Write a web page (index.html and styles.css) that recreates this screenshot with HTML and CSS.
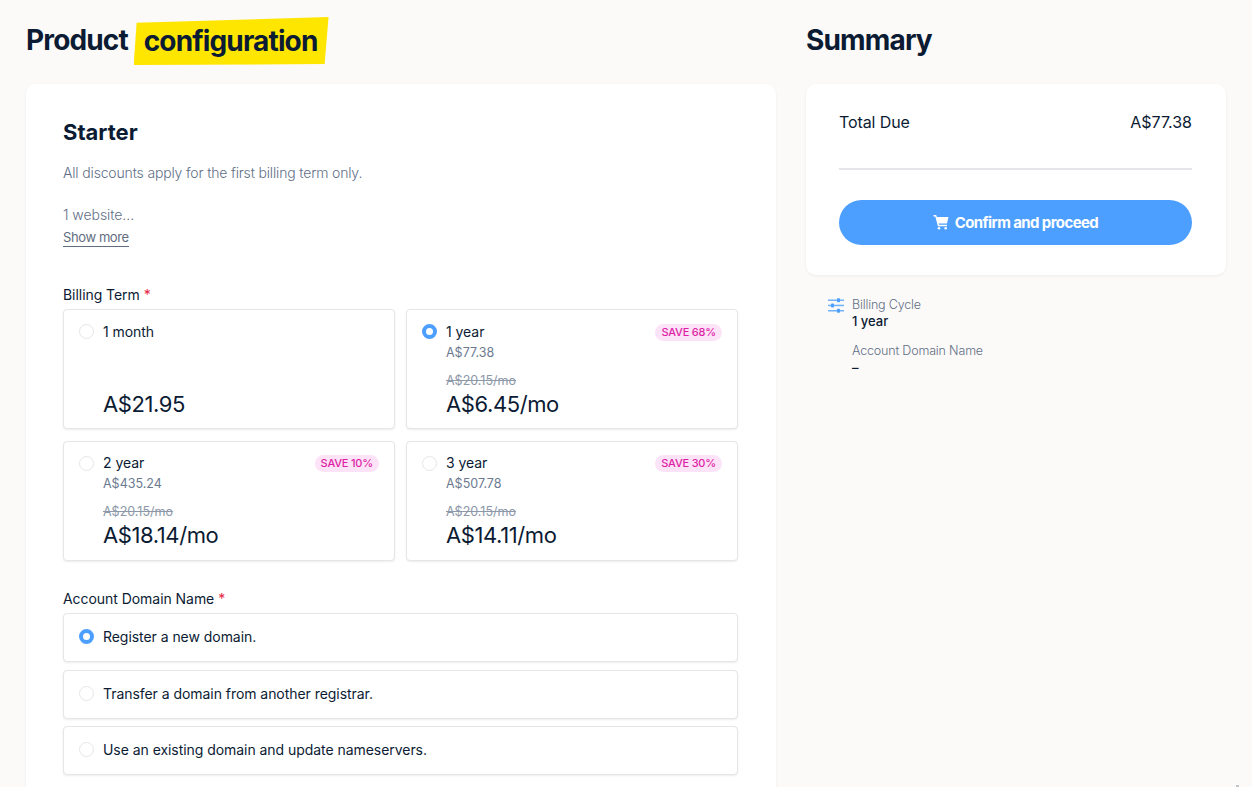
FILE: index.html
```html
<!DOCTYPE html>
<html lang="en">
<head>
  <meta charset="UTF-8">
  <meta name="viewport" content="width=device-width, initial-scale=1.0">
  <title>Product configuration</title>
  <link rel="stylesheet" href="styles.css">
</head>
<body>
  <div class="page">
    <div class="main">
      <h1 class="page-title">Product <span class="marker">configuration</span></h1>
      <div class="card config">
        <h2 class="plan-name">Starter</h2>
        <p class="note">All discounts apply for the first billing term only.</p>
        <p class="features">1 website...</p>
        <a class="show-more" href="#">Show more</a>

        <div class="field billing">
          <div class="field-label">Billing Term <span class="req">*</span></div>
          <div class="terms">
            <div class="option term">
              <span class="radio"></span>
              <div class="term-body">
                <div class="term-head"><span class="term-name">1 month</span></div>
                <div class="term-price">A$21.95</div>
              </div>
            </div>
            <div class="option term">
              <span class="radio checked"></span>
              <div class="term-body">
                <div class="term-head"><span class="term-name">1 year</span><span class="save">SAVE 68%</span></div>
                <div class="term-total">A$77.38</div>
                <div class="term-old">A$20.15/mo</div>
                <div class="term-price">A$6.45/mo</div>
              </div>
            </div>
            <div class="option term">
              <span class="radio"></span>
              <div class="term-body">
                <div class="term-head"><span class="term-name">2 year</span><span class="save">SAVE 10%</span></div>
                <div class="term-total">A$435.24</div>
                <div class="term-old">A$20.15/mo</div>
                <div class="term-price">A$18.14/mo</div>
              </div>
            </div>
            <div class="option term">
              <span class="radio"></span>
              <div class="term-body">
                <div class="term-head"><span class="term-name">3 year</span><span class="save">SAVE 30%</span></div>
                <div class="term-total">A$507.78</div>
                <div class="term-old">A$20.15/mo</div>
                <div class="term-price">A$14.11/mo</div>
              </div>
            </div>
          </div>
        </div>

        <div class="field domain">
          <div class="field-label">Account Domain Name <span class="req">*</span></div>
          <div class="domains">
            <div class="option domain-row"><span class="radio checked"></span>Register a new domain.</div>
            <div class="option domain-row"><span class="radio"></span>Transfer a domain from another registrar.</div>
            <div class="option domain-row"><span class="radio"></span>Use an existing domain and update nameservers.</div>
          </div>
        </div>
      </div>
    </div>

    <div class="side">
      <h1 class="page-title summary-title">Summary</h1>
      <div class="card summary">
        <div class="total"><span class="total-label">Total Due</span><span>A$77.38</span></div>
        <button class="confirm">
          <svg class="cart" viewBox="0 0 16 16" width="16" height="16" fill="#fff">
            <path d="M0.500 1H3.200L3.900 3H15.500L14 9.500H5.600L6 10.800H14V12.200H4.900L2.300 2.400H0.500Z"/>
            <circle cx="6" cy="14.300" r="1.300"/>
            <circle cx="12.700" cy="14.300" r="1.300"/>
          </svg>
          Confirm and proceed
        </button>
      </div>
      <div class="details">
        <svg class="sliders" viewBox="0 0 16 16" width="16" height="16" fill="#4d9fff">
          <rect class="slider-line" x="0" y="1.500" width="16" height="1.500"/><rect x="9" y="0.300" width="3" height="4" rx="0.800"/>
          <rect class="slider-line" x="0" y="6.700" width="16" height="1.500"/><rect x="3" y="5.500" width="3" height="4" rx="0.800"/>
          <rect class="slider-line" x="0" y="12" width="16" height="1.500"/><rect x="9" y="10.800" width="3" height="4" rx="0.800"/>
        </svg>
        <div class="detail-list">
          <div class="detail-label">Billing Cycle</div>
          <div class="detail-value">1 year</div>
          <div class="detail-label second">Account Domain Name</div>
          <div class="detail-value">–</div>
        </div>
      </div>
    </div>
  </div>
  <div class="corner-mark"></div>
</body>
</html>
```

FILE: styles.css
```css
html, body {
  height: 100%;
  overflow: hidden;
}

body {
  margin: 0;
  font-family: Inter, "Noto Sans", sans-serif;
  background-color: #fcfaf8;
  color: #0b1b33;
}

.page {
  display: flex;
  gap: 30px;
  padding-left: 26px;
}

.main {
  width: 750px;
}

.side {
  width: 420px;
}

.page-title {
  margin: 0;
  height: 84px;
  font-size: 28px;
  font-weight: 700;
  letter-spacing: -0.85px;
  line-height: 34px;
  padding-top: 23px;
  box-sizing: border-box;
  color: #0b1b33;
}

.marker {
  display: inline-block;
  position: relative;
  top: 1px;
  z-index: 0;
  padding: 0 11px 0 10px;
}

.marker::before {
  content: "";
  position: absolute;
  z-index: -1;
  left: 0;
  right: 0;
  top: -7px;
  bottom: -7px;
  background-color: #ffe600;
  clip-path: polygon(1.500% 12%, 100% 0, 98% 98%, 0 100%);
}

.card {
  background-color: #fff;
  border-radius: 10px;
  box-shadow: 0 1px 3px rgba(20, 30, 50, 0.06);
}

.config {
  padding: 33px 38px 40px 37px;
}

.plan-name {
  margin: 0;
  font-size: 22px;
  font-weight: 700;
  line-height: 30px;
}

.note {
  margin: 16px 0 0;
  font-size: 14px;
  font-weight: 300;
  letter-spacing: -0.16px;
  line-height: 20px;
  color: #5f6f87;
}

.features {
  margin: 22px 0 0;
  font-size: 14px;
  font-weight: 300;
  letter-spacing: -0.05px;
  line-height: 20px;
  color: #5f6f87;
}

.show-more {
  display: inline-block;
  margin-top: 4px;
  font-size: 13px;
  letter-spacing: -0.4px;
  line-height: 17px;
  color: #5f6d80;
  text-decoration: none;
  border-bottom: 1px solid #5f6d80;
}

.field-label {
  font-size: 14px;
  letter-spacing: -0.05px;
  line-height: 20px;
  color: #0b1b33;
}

.req {
  color: #e5253f;
}

.billing {
  margin-top: 38px;
}

.terms {
  display: grid;
  grid-template-columns: 332px 332px;
  gap: 11.600px 11px;
  margin-top: 4px;
}

.option {
  display: flex;
  box-sizing: border-box;
  border: 1px solid #e4e6ea;
  border-radius: 4px;
  background-color: #fff;
  box-shadow: 0 1px 2px rgba(20, 30, 50, 0.08);
}

.term {
  height: 120px;
  padding: 12px 15px 10.300px;
}

.radio {
  flex: none;
  width: 15px;
  height: 15px;
  margin: 2px 9px 0 0;
  box-sizing: border-box;
  border: 1px solid #e4e6ea;
  border-radius: 50%;
  background-color: #fff;
}

.radio.checked {
  border: 4px solid #4d9fff;
}

.term-body {
  flex: 1;
  display: flex;
  flex-direction: column;
}

.term-head {
  display: flex;
  justify-content: space-between;
  align-items: center;
  height: 18px;
  font-size: 14px;
  letter-spacing: -0.05px;
}

.save {
  margin-top: 2px;
  padding: 0 6px;
  border-radius: 9px;
  background-color: #fde3f7;
  color: #dd1fa6;
  font-size: 11px;
  font-weight: 500;
  letter-spacing: -0.2px;
  line-height: 17px;
}

.term-total {
  margin-top: 4.600px;
  font-size: 12.500px;
  line-height: 16px;
  color: #6b7a90;
}

.term-old {
  margin-top: auto;
  margin-bottom: 1px;
  font-size: 12.500px;
  line-height: 16px;
  color: #8d98a8;
  text-decoration: line-through;
}

.term-price {
  margin-top: auto;
  font-size: 22px;
  letter-spacing: -0.4px;
  line-height: 28px;
  color: #0b1b33;
}

.term-old + .term-price {
  margin-top: 0;
}

.domain {
  margin-top: 28.400px;
}

.domains {
  display: flex;
  flex-direction: column;
  gap: 7.600px;
  margin-top: 4px;
}

.domain-row {
  align-items: center;
  height: 49px;
  padding: 0 15px 2px;
  font-size: 14px;
  letter-spacing: -0.05px;
}

.domain-row .radio {
  margin-top: 0;
}

.summary {
  height: 191px;
  box-sizing: border-box;
  padding: 27px 34px 0 33px;
}

.total {
  display: flex;
  justify-content: space-between;
  height: 57px;
  font-size: 16px;
  line-height: 22px;
  border-bottom: 2px solid #e4e6ea;
}

.total-label {
  letter-spacing: -0.1px;
}

.confirm {
  display: flex;
  justify-content: center;
  align-items: center;
  gap: 6px;
  width: 100%;
  height: 45px;
  padding-bottom: 2px;
  margin-top: 30px;
  border: none;
  border-radius: 23px;
  background-color: #4d9fff;
  color: #fff;
  font-family: inherit;
  font-size: 15px;
  font-weight: 700;
  letter-spacing: -0.6px;
  cursor: pointer;
}

.details {
  display: flex;
  gap: 8px;
  padding: 22px 0 0 22px;
}

.sliders {
  flex: none;
  margin-top: 1px;
}

.slider-line {
  opacity: 0.8;
}

.detail-label {
  font-size: 12.500px;
  font-weight: 300;
  letter-spacing: -0.17px;
  line-height: 16px;
  color: #5f6f87;
}

.detail-label.second {
  margin-top: 13px;
}

.detail-value {
  font-size: 13px;
  line-height: 17px;
  font-weight: 500;
  color: #0b1b33;
}

.corner-mark {
  position: fixed;
  right: 13px;
  bottom: 0;
  width: 3px;
  height: 2px;
  background-color: #c4c4c4;
}
```
